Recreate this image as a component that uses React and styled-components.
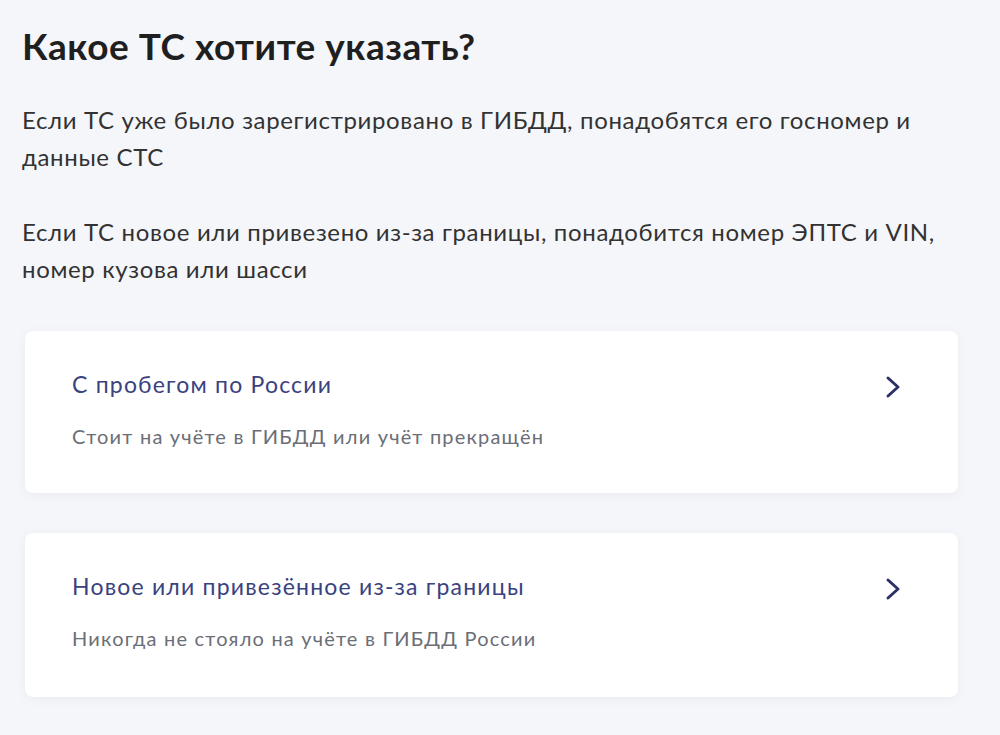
import React from "react";
import styled, { createGlobalStyle } from "styled-components";

const GlobalStyle = createGlobalStyle`
  html, body {
    margin: 0;
    background: #f5f6fa;
    font-family: Lato, "Open Sans", "Liberation Sans", sans-serif;
  }
`;

const Page = styled.div`
  padding: 24px 20px 40px 22px;
  color: #222;
`;

const Title = styled.h1`
  margin: 0 0 33px;
  font-size: 37px;
  line-height: 44px;
  font-weight: 700;
  letter-spacing: 0.5px;
  color: #1f1f1f;
`;

const Paragraph = styled.p`
  margin: 0 0 ${(p) => p.gap}px;
  font-size: 24px;
  line-height: 37px;
  letter-spacing: 0.65px;
  white-space: nowrap;
  color: #323232;
`;

const Options = styled.div`
  display: flex;
  flex-direction: column;
  gap: 40px;
  margin-left: 3px;
  width: 933px;
`;

const Card = styled.button`
  display: flex;
  align-items: flex-start;
  justify-content: space-between;
  box-sizing: border-box;
  height: ${(p) => p.h}px;
  padding: 38px 57px 0 47px;
  border: none;
  border-radius: 8px;
  background: #fff;
  box-shadow: 0 2px 10px rgba(100, 110, 140, 0.08);
  text-align: left;
  font-family: inherit;
  cursor: pointer;
`;

const CardText = styled.div`
  display: flex;
  flex-direction: column;
  gap: 24px;
`;

const CardTitle = styled.div`
  font-size: 23px;
  line-height: 30px;
  letter-spacing: 1.2px;
  color: #3a4280;
`;

const CardSub = styled.div`
  font-size: 20px;
  line-height: 26px;
  letter-spacing: 1.2px;
  color: #6b6e76;
`;

const Chevron = styled.svg`
  margin-top: 6px;
  flex-shrink: 0;
`;

const options = [
  {
    title: "С пробегом по России",
    sub: "Стоит на учёте в ГИБДД или учёт прекращён",
    h: 162,
  },
  {
    title: "Новое или привезённое из-за границы",
    sub: "Никогда не стояло на учёте в ГИБДД России",
    h: 164,
  },
];

export default function App() {
  return (
    <Page>
      <GlobalStyle />
      <Title>Какое ТС хотите указать?</Title>
      <Paragraph gap={38}>
        Если ТС уже было зарегистрировано в ГИБДД, понадобятся его госномер и
        <br />
        данные СТС
      </Paragraph>
      <Paragraph gap={44}>
        Если ТС новое или привезено из-за границы, понадобится номер ЭПТС и VIN,
        <br />
        номер кузова или шасси
      </Paragraph>
      <Options>
        {options.map((o) => (
          <Card key={o.title} h={o.h}>
            <CardText>
              <CardTitle>{o.title}</CardTitle>
              <CardSub>{o.sub}</CardSub>
            </CardText>
            <Chevron width="16" height="24" viewBox="0 0 16 24" fill="none">
              <path
                d="M3 3L13 12L3 21"
                stroke="#2c3166"
                strokeWidth="3"
                strokeLinecap="round"
                strokeLinejoin="round"
              />
            </Chevron>
          </Card>
        ))}
      </Options>
    </Page>
  );
}
